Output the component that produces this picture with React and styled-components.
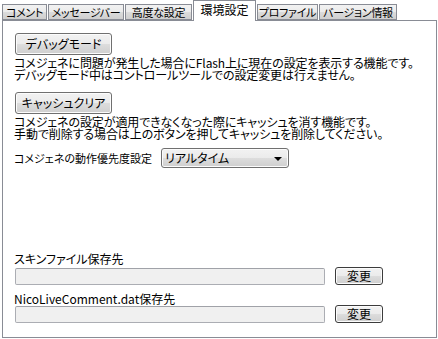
import React from "react";
import styled, { createGlobalStyle } from "styled-components";

const Global = createGlobalStyle`
  html, body { margin: 0; padding: 0; background: #fff; }
  body {
    font-family: "Noto Sans CJK JP", "Noto Sans", sans-serif;
    font-size: 12px;
    color: #000;
    font-feature-settings: "palt";
  }
`;

const Frame = styled.div`
  width: 438px;
  height: 339px;
  box-sizing: border-box;
  padding-left: 2px;
`;

const TabBar = styled.div`
  display: flex;
  align-items: flex-end;
  height: 20px;
  gap: 1px;
`;

const Tab = styled.div`
  position: relative;
  box-sizing: border-box;
  height: ${(p) => (p.$active ? "21px" : "16px")};
  width: ${(p) => p.$w}px;
  margin-bottom: ${(p) => (p.$active ? "-1px" : "0")};
  z-index: ${(p) => (p.$active ? 1 : 0)};
  border: 1px solid #898c95;
  border-bottom: ${(p) => (p.$active ? "none" : "1px solid #898c95")};
  background: ${(p) =>
    p.$active ? "#fff" : "linear-gradient(#f2f2f2, #ebebeb 50%, #dcdcdc 50%, #cfcfcf)"};
  display: flex;
  align-items: center;
  justify-content: center;
  font-size: ${(p) => (p.$active ? "12px" : "11px")};
  letter-spacing: ${(p) => (p.$active ? "0" : "-0.3px")};
  line-height: 12px;
  padding-bottom: ${(p) => (p.$active ? "3px" : "0")};
  white-space: nowrap;
  overflow: hidden;
`;

const Panel = styled.div`
  box-sizing: border-box;
  width: 435px;
  height: 318px;
  border: 1px solid #898c95;
  padding: 12px 0 0 11px;
  display: flex;
  flex-direction: column;
  align-items: flex-start;
`;

const Button = styled.button`
  box-sizing: border-box;
  width: ${(p) => p.$w}px;
  height: ${(p) => p.$h}px;
  margin: ${(p) => p.$m || "0"};
  padding: 0;
  border: 1px solid ${(p) => p.$border || "#707070"};
  border-radius: 3px;
  background: linear-gradient(#f2f2f2, #ebebeb 50%, #dddddd 50%, #cfcfcf);
  box-shadow: inset 0 0 0 1px #fcfcfc;
  font-family: inherit;
  font-size: 12px;
  font-feature-settings: "palt";
  line-height: 12px;
  color: #000;
  flex-shrink: 0;
`;

const Desc = styled.div`
  line-height: 12px;
  margin: ${(p) => p.$m || "0"};
  white-space: nowrap;
  letter-spacing: -0.1px;
`;

const Row = styled.div`
  display: flex;
  align-items: center;
  gap: ${(p) => p.$gap || 0}px;
  margin: ${(p) => p.$m || "0"};
`;

const Label = styled.div`
  line-height: 12px;
  white-space: nowrap;
  font-size: ${(p) => p.$size || 12}px;
  margin: ${(p) => p.$m || "0"};
`;

const Select = styled.div`
  box-sizing: border-box;
  width: 128px;
  height: 20px;
  border: 1px solid #707070;
  border-radius: 3px;
  background: linear-gradient(#f2f2f2, #ebebeb 50%, #dddddd 50%, #cfcfcf);
  box-shadow: inset 0 0 0 1px #fcfcfc;
  display: flex;
  align-items: center;
  justify-content: space-between;
  padding: 0 6px 0 3px;
  line-height: 12px;
`;

const Arrow = styled.span`
  width: 0;
  height: 0;
  border-left: 4px solid transparent;
  border-right: 4px solid transparent;
  border-top: 4px solid #000;
  margin-top: 1px;
`;

const Field = styled.div`
  box-sizing: border-box;
  width: 310px;
  height: 17px;
  border: 1px solid #abadb3;
  border-top-color: #a0a2a8;
  border-radius: 2px;
  background: #f0f0f0;
  margin-left: 1px;
`;

const tabs = [
  ["コメント", 45],
  ["メッセージバー", 76],
  ["高度な設定", 67],
  ["環境設定", 63, true],
  ["プロファイル", 61],
  ["バージョン情報", 78],
];

export default function App() {
  return (
    <>
      <Global />
      <Frame>
        <TabBar>
          {tabs.map(([t, w, a]) => (
            <Tab key={t} $w={w} $active={a}>
              {t}
            </Tab>
          ))}
        </TabBar>
        <Panel>
          <Button $w={97} $h={22} $m="0 0 0 1px">デバッグモード</Button>
          <Desc $m="2px 0 0 0">
            コメジェネに問題が発生した場合にFlash上に現在の設定を表示する機能です。
            <br />
            デバッグモード中はコントロールツールでの設定変更は行えません。
          </Desc>
          <Button $w={97} $h={22} $m="11px 0 0 1px">キャッシュクリア</Button>
          <Desc $m="2px 0 0 0">
            コメジェネの設定が適用できなくなった際にキャッシュを消す機能です。
            <br />
            手動で削除する場合は上のボタンを押してキャッシュを削除してください。
          </Desc>
          <Row $gap={9} $m="8px 0 0 0">
            <Label $size={11}>コメジェネの動作優先度設定</Label>
            <Select>
              <span>リアルタイム</span>
              <Arrow />
            </Select>
          </Row>
          <Label $m="85px 0 0 0">スキンファイル保存先</Label>
          <Row $gap={10} $m="2px 0 0 0">
            <Field />
            <Button $w={48} $h={18} $border="#3c3c3c">変更</Button>
          </Row>
          <Label $m="8px 0 0 0">NicoLiveComment.dat保存先</Label>
          <Row $gap={10} $m="0 0 0 0">
            <Field />
            <Button $w={48} $h={18} $border="#3c3c3c">変更</Button>
          </Row>
        </Panel>
      </Frame>
    </>
  );
}
